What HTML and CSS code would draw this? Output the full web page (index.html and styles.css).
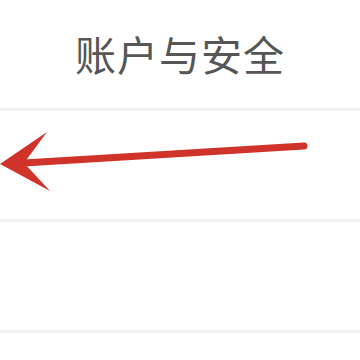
FILE: index.html
```html
<!DOCTYPE html>
<html lang="zh">
<head>
    <meta charset="UTF-8">
    <meta name="viewport" content="width=device-width, initial-scale=1.0">
    <title>账户与安全</title>
    <link rel="stylesheet" href="styles.css">
</head>
<body>
    <div class="pantalla">
        <header class="cabecera">
            <h1 class="titulo">账户与安全</h1>
        </header>

        <ul class="lista">
            <li class="fila"></li>
            <li class="fila"></li>
            <li class="fila"></li>
        </ul>

        <!-- flecha roja de señalización -->
        <svg class="flecha" width="360" height="360" viewBox="0 0 360 360">
            <line x1="304" y1="146" x2="24" y2="163" stroke="#cf3329" stroke-width="7" stroke-linecap="round"/>
            <polygon points="0,164 47,132 24,163 50,191" fill="#cf3329"/>
        </svg>
    </div>
</body>
</html>
```

FILE: styles.css
```css
/* Reset */
body, h1, ul, li {
    margin: 0;
    padding: 0;
}

body {
    font-family: "Noto Sans CJK SC", "Noto Sans", sans-serif;
    background-color: #fff;
    color: #555;
}

.pantalla {
    position: relative;
    width: 360px;
    height: 360px;
    overflow: hidden;
}

.cabecera {
    height: 108px;
    display: flex;
    align-items: center;
    justify-content: center;
}

.titulo {
    font-size: 41px;
    font-weight: normal;
    color: #565656;
    letter-spacing: 1px;
    margin-top: -2px;
}

.lista {
    list-style: none;
}

.fila {
    height: 108px;
    border-top: 3px solid #f2f2f2;
}

.flecha {
    position: absolute;
    left: 0;
    top: 0;
}
```
